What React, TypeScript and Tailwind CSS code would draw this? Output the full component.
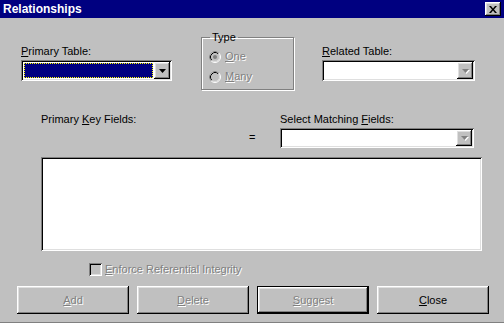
import React from 'react';

const raised =
  'shadow-[inset_-1px_-1px_#000,inset_1px_1px_#fff,inset_-2px_-2px_#808080,inset_2px_2px_#dfdfdf]';
const sunken =
  'shadow-[inset_1px_1px_#808080,inset_-1px_-1px_#fff,inset_2px_2px_#000,inset_-2px_-2px_#dfdfdf]';
const grayText = 'text-[#808080] [text-shadow:1px_1px_0_#fff]';

const Arrow: React.FC<{ disabled?: boolean }> = ({ disabled }) => (
  <svg width="9" height="6" viewBox="0 0 9 6">
    {disabled && <path d="M2 2h7l-3.5 4z" fill="#fff" />}
    <path d="M1 1h7l-3.5 4z" fill={disabled ? '#808080' : '#000'} />
  </svg>
);

const Combo: React.FC<{ width: string; height: string; selected?: boolean; disabled?: boolean }> = ({
  width,
  height,
  selected,
  disabled,
}) => (
  <div className={`${width} ${height} ${sunken} bg-white p-[2px] flex`}>
    <div className="flex-1 p-[1px]">
      {selected && <div className="h-full bg-[#000080] border border-dotted border-[#ffff00]" />}
    </div>
    <div className={`w-[16px] h-full bg-[#c0c0c0] ${raised} flex items-center justify-center`}>
      <Arrow disabled={disabled} />
    </div>
  </div>
);

const Radio: React.FC<{ checked?: boolean }> = ({ checked }) => (
  <svg width="12" height="12" viewBox="0 0 12 12">
    <circle cx="6" cy="6" r="5" fill="#c0c0c0" />
    <circle cx="6" cy="6" r="5.5" fill="none" stroke="#fff" />
    <path d="M2.11 9.89A5.5 5.5 0 0 1 9.89 2.11" fill="none" stroke="#808080" />
    <circle cx="6" cy="6" r="4.5" fill="none" stroke="#dfdfdf" />
    <path d="M2.82 9.18A4.5 4.5 0 0 1 9.18 2.82" fill="none" stroke="#000" />
    {checked && <circle cx="6" cy="6" r="2" fill="#808080" />}
  </svg>
);

const Btn: React.FC<{ label: string; key0: string; disabled?: boolean; isDefault?: boolean }> = ({
  label,
  key0,
  disabled,
  isDefault,
}) => (
  <div
    className={`w-[112px] h-[28px] flex ${isDefault ? 'border border-black' : ''}`}
  >
    <div
      className={`flex-1 flex items-center justify-center bg-[#c0c0c0] ${raised} ${
        disabled ? grayText : 'text-black'
      }`}
    >
      <span>
        <span className="underline">{key0}</span>
        {label}
      </span>
    </div>
  </div>
);

export default function App() {
  return (
    <div
      className="w-[504px] h-[323px] bg-[#c0c0c0] flex flex-col text-[11px] leading-[13px] text-black border-b border-[#808080] overflow-hidden"
      style={{ fontFamily: '"Liberation Sans", Arial, sans-serif' }}
    >
      {/* title bar */}
      <div className="h-[18px] bg-[#000080] flex items-center justify-between pl-[3px] pr-[3px]">
        <span className="text-white font-bold text-[12px]">Relationships</span>
        <div className={`w-[16px] h-[14px] bg-[#c0c0c0] ${raised} flex items-center justify-center`}>
          <svg width="8" height="7" viewBox="0 0 8 7">
            <path d="M0 0h2l2 2.5L6 0h2L5 3.5 8 7H6L4 4.5 2 7H0l3-3.5z" fill="#000" />
          </svg>
        </div>
      </div>

      {/* tables row */}
      <div className="flex items-start pl-[21px] pt-[13px]">
        <div className="w-[151px] mt-[14px]">
          <div className="h-[13px]">
            <span className="underline">P</span>rimary Table:
          </div>
          <div className="mt-[2px]">
            <Combo width="w-[151px]" height="h-[21px]" selected />
          </div>
        </div>

        <fieldset className="ml-[29px] w-[93px] h-[59px] border border-[#808080] shadow-[inset_1px_1px_#fff,1px_1px_#fff] px-[6px]">
          <legend className="px-[2px] ml-[2px]">Type</legend>
          <div className="flex flex-col gap-[7px] mt-[6px] ml-[1px]">
            <div className="flex items-center gap-[4px]">
              <Radio checked />
              <span className={grayText}>
                <span className="underline">O</span>ne
              </span>
            </div>
            <div className="flex items-center gap-[4px]">
              <Radio />
              <span className={grayText}>
                <span className="underline">M</span>any
              </span>
            </div>
          </div>
        </fieldset>

        <div className="ml-[28px] w-[153px] mt-[14px]">
          <div className="h-[13px]">
            <span className="underline">R</span>elated Table:
          </div>
          <div className="mt-[2px]">
            <Combo width="w-[153px]" height="h-[21px]" disabled />
          </div>
        </div>
      </div>

      {/* fields row */}
      <div className="flex items-end ml-[41px] mt-[23px]">
        <div className="w-[206px] self-start">
          Primary <span className="underline">K</span>ey Fields:
        </div>
        <div className="w-[33px] pl-[2px] pb-[4px]">=</div>
        <div className="w-[194px]">
          <div className="h-[13px]">
            Select Matching <span className="underline">F</span>ields:
          </div>
          <div className="mt-[2px]">
            <Combo width="w-[194px]" height="h-[20px]" disabled />
          </div>
        </div>
      </div>

      <div className={`ml-[41px] mt-[9px] w-[441px] h-[94px] bg-white ${sunken}`} />

      {/* checkbox */}
      <div className="flex items-center ml-[89px] mt-[12px] gap-[3px]">
        <div className={`w-[13px] h-[13px] bg-[#c0c0c0] ${sunken}`} />
        <span className={grayText}>
          <span className="underline">E</span>nforce Referential Integrity
        </span>
      </div>

      {/* buttons */}
      <div className="flex ml-[17px] mt-[10px] gap-[8px]">
        <Btn key0="A" label="dd" disabled />
        <Btn key0="D" label="elete" disabled />
        <Btn key0="S" label="uggest" disabled isDefault />
        <Btn key0="C" label="lose" />
      </div>
    </div>
  );
}
